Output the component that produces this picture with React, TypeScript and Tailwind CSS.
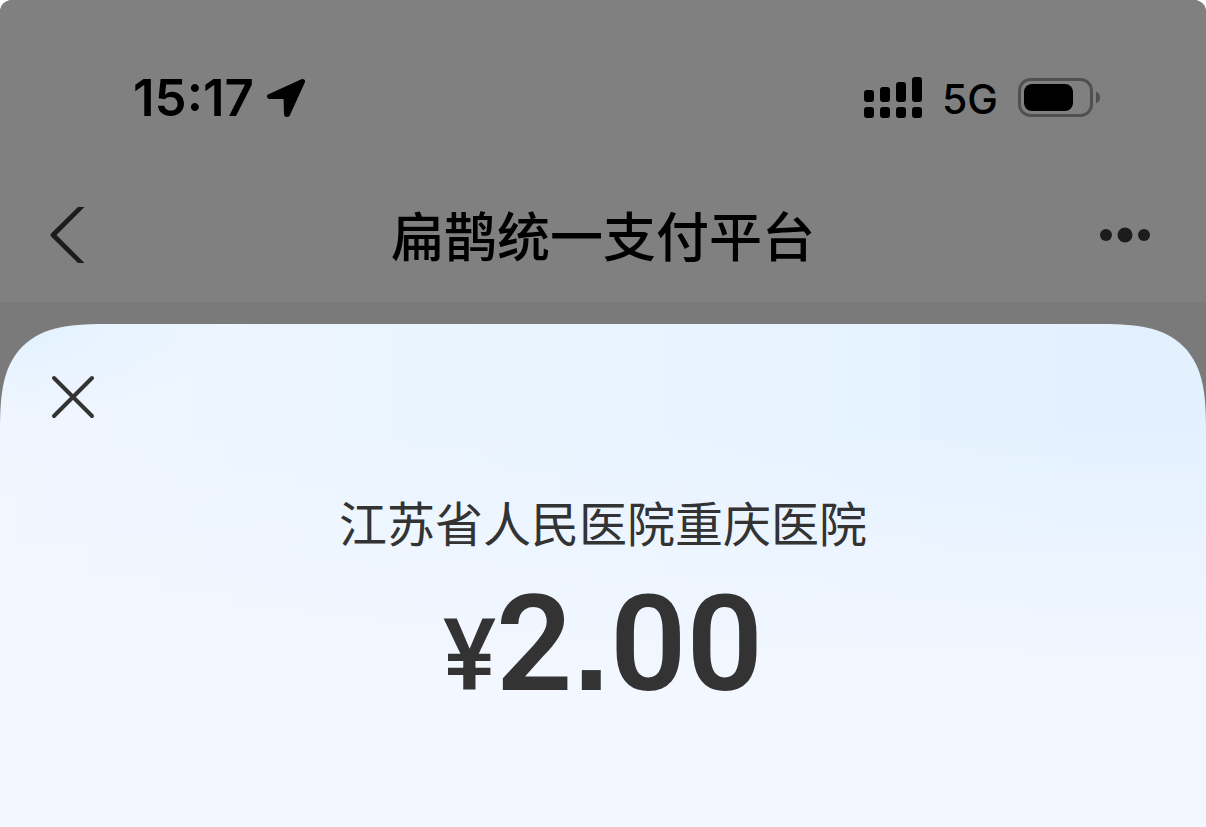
import React from 'react';

const signalBars = [
    { x: 0, y: 13, height: 12 },
    { x: 16, y: 10, height: 15 },
    { x: 32, y: 5, height: 20 },
    { x: 48, y: 0, height: 25 },
];

const LocationIcon: React.FC = () => (
    <svg className="h-10 w-10" viewBox="0 0 40 40" fill="currentColor" stroke="currentColor" strokeWidth="5" strokeLinejoin="round" aria-hidden="true">
        <path d="M36.500 3.500 3.500 18.500 20 18.500 20.500 36.500 21.500 36.500Z" />
    </svg>
);

const SignalIcon: React.FC = () => (
    <svg className="h-[41px] w-[58px]" viewBox="0 0 58 41" fill="currentColor" aria-hidden="true">
        {signalBars.map(bar => (
            <g key={bar.x}>
                <rect x={bar.x} y={bar.y} width="10" height={bar.height} rx="3" />
                <rect x={bar.x} y="30" width="10" height="11" rx="3" />
            </g>
        ))}
    </svg>
);

const BatteryIcon: React.FC = () => (
    <svg className="h-[39px] w-[82px]" viewBox="0 0 82 39" aria-hidden="true">
        <rect x="1.5" y="1.5" width="72" height="36" rx="11" fill="none" stroke="#505050" strokeWidth="3" />
        <rect x="6" y="6" width="49" height="27" rx="8" fill="#000" />
        <path d="M78 13.5C80.500 14.500 82 16.500 82 19.500 82 22.500 80.500 24.500 78 25.500Z" fill="#505050" />
    </svg>
);

const StatusBar: React.FC = () => (
    <div className="flex h-[167px] items-center justify-between pt-7 pr-[106px] pl-[133px] font-['Inter',sans-serif] text-black">
        <div className="flex items-center gap-3">
            <span className="text-[51px] leading-none font-semibold">15:17</span>
            <LocationIcon />
        </div>
        <div className="flex items-center gap-5">
            <SignalIcon />
            <span className="pt-1 text-[41px] leading-none font-medium">5G</span>
            <BatteryIcon />
        </div>
    </div>
);

const NavBar: React.FC = () => (
    <header className="grid h-[135px] grid-cols-[1fr_auto_1fr] items-center px-[50px]">
        <button type="button" aria-label="返回" className="justify-self-start text-[#1c1c1c]">
            <svg className="h-14 w-[35px]" viewBox="0 0 35 56" fill="currentColor" aria-hidden="true">
                <path d="M28 0H34.500L6.500 28 34.500 56H28L1 29.500Q0 28 1 26.500Z" />
            </svg>
        </button>
        <h1 className="text-[53px] leading-none font-medium text-black">扁鹊统一支付平台</h1>
        <button type="button" aria-label="更多" className="justify-self-end text-[#1c1c1c]">
            <svg className="h-4 w-[56px]" viewBox="0 0 56 16" fill="currentColor" aria-hidden="true">
                <circle cx="6" cy="8" r="6" />
                <circle cx="25" cy="8" r="7.500" />
                <circle cx="44" cy="8" r="6" />
            </svg>
        </button>
    </header>
);

const PaymentSheet: React.FC = () => (
    <section className="flex grow flex-col rounded-t-[80px] bg-[radial-gradient(ellipse_at_top_left,#e1f1ff_0%,transparent_13%),linear-gradient(to_bottom,transparent_20%,#f3f7ff_72%),linear-gradient(to_right,#f0f6ff_0%,#ebf5ff_30%,#e3f1ff_90%)] px-[50px] pt-[50px] text-[#333333] supports-[corner-shape:squircle]:rounded-t-[110px] supports-[corner-shape:squircle]:[corner-shape:superellipse(1.6)]">
        <button type="button" aria-label="关闭" className="self-start">
            <svg className="h-[46px] w-[46px]" viewBox="0 0 46 46" fill="none" stroke="currentColor" strokeWidth="4" strokeLinecap="round" aria-hidden="true">
                <path d="M4 4 42 42M42 4 4 42" />
            </svg>
        </button>
        <h2 className="mt-[77px] text-center text-5xl leading-none">江苏省人民医院重庆医院</h2>
        <p className="mt-8 flex items-baseline justify-center font-['Roboto',sans-serif] font-semibold">
            <span className="text-[100px] leading-none font-medium">¥</span>
            <span className="text-[134px] leading-none">
                2<span className="font-['Liberation_Sans',sans-serif]">.</span>00
            </span>
        </p>
    </section>
);

const App: React.FC = () => (
    <div className="min-h-screen bg-white font-['Noto_Sans_CJK_SC',sans-serif]">
        <main className="flex min-h-screen flex-col rounded-t-xl bg-[#7a7a7a]">
            <div className="mb-[22px] rounded-t-xl bg-[#808080]">
                <StatusBar />
                <NavBar />
            </div>
            <PaymentSheet />
        </main>
    </div>
);

export default App;
